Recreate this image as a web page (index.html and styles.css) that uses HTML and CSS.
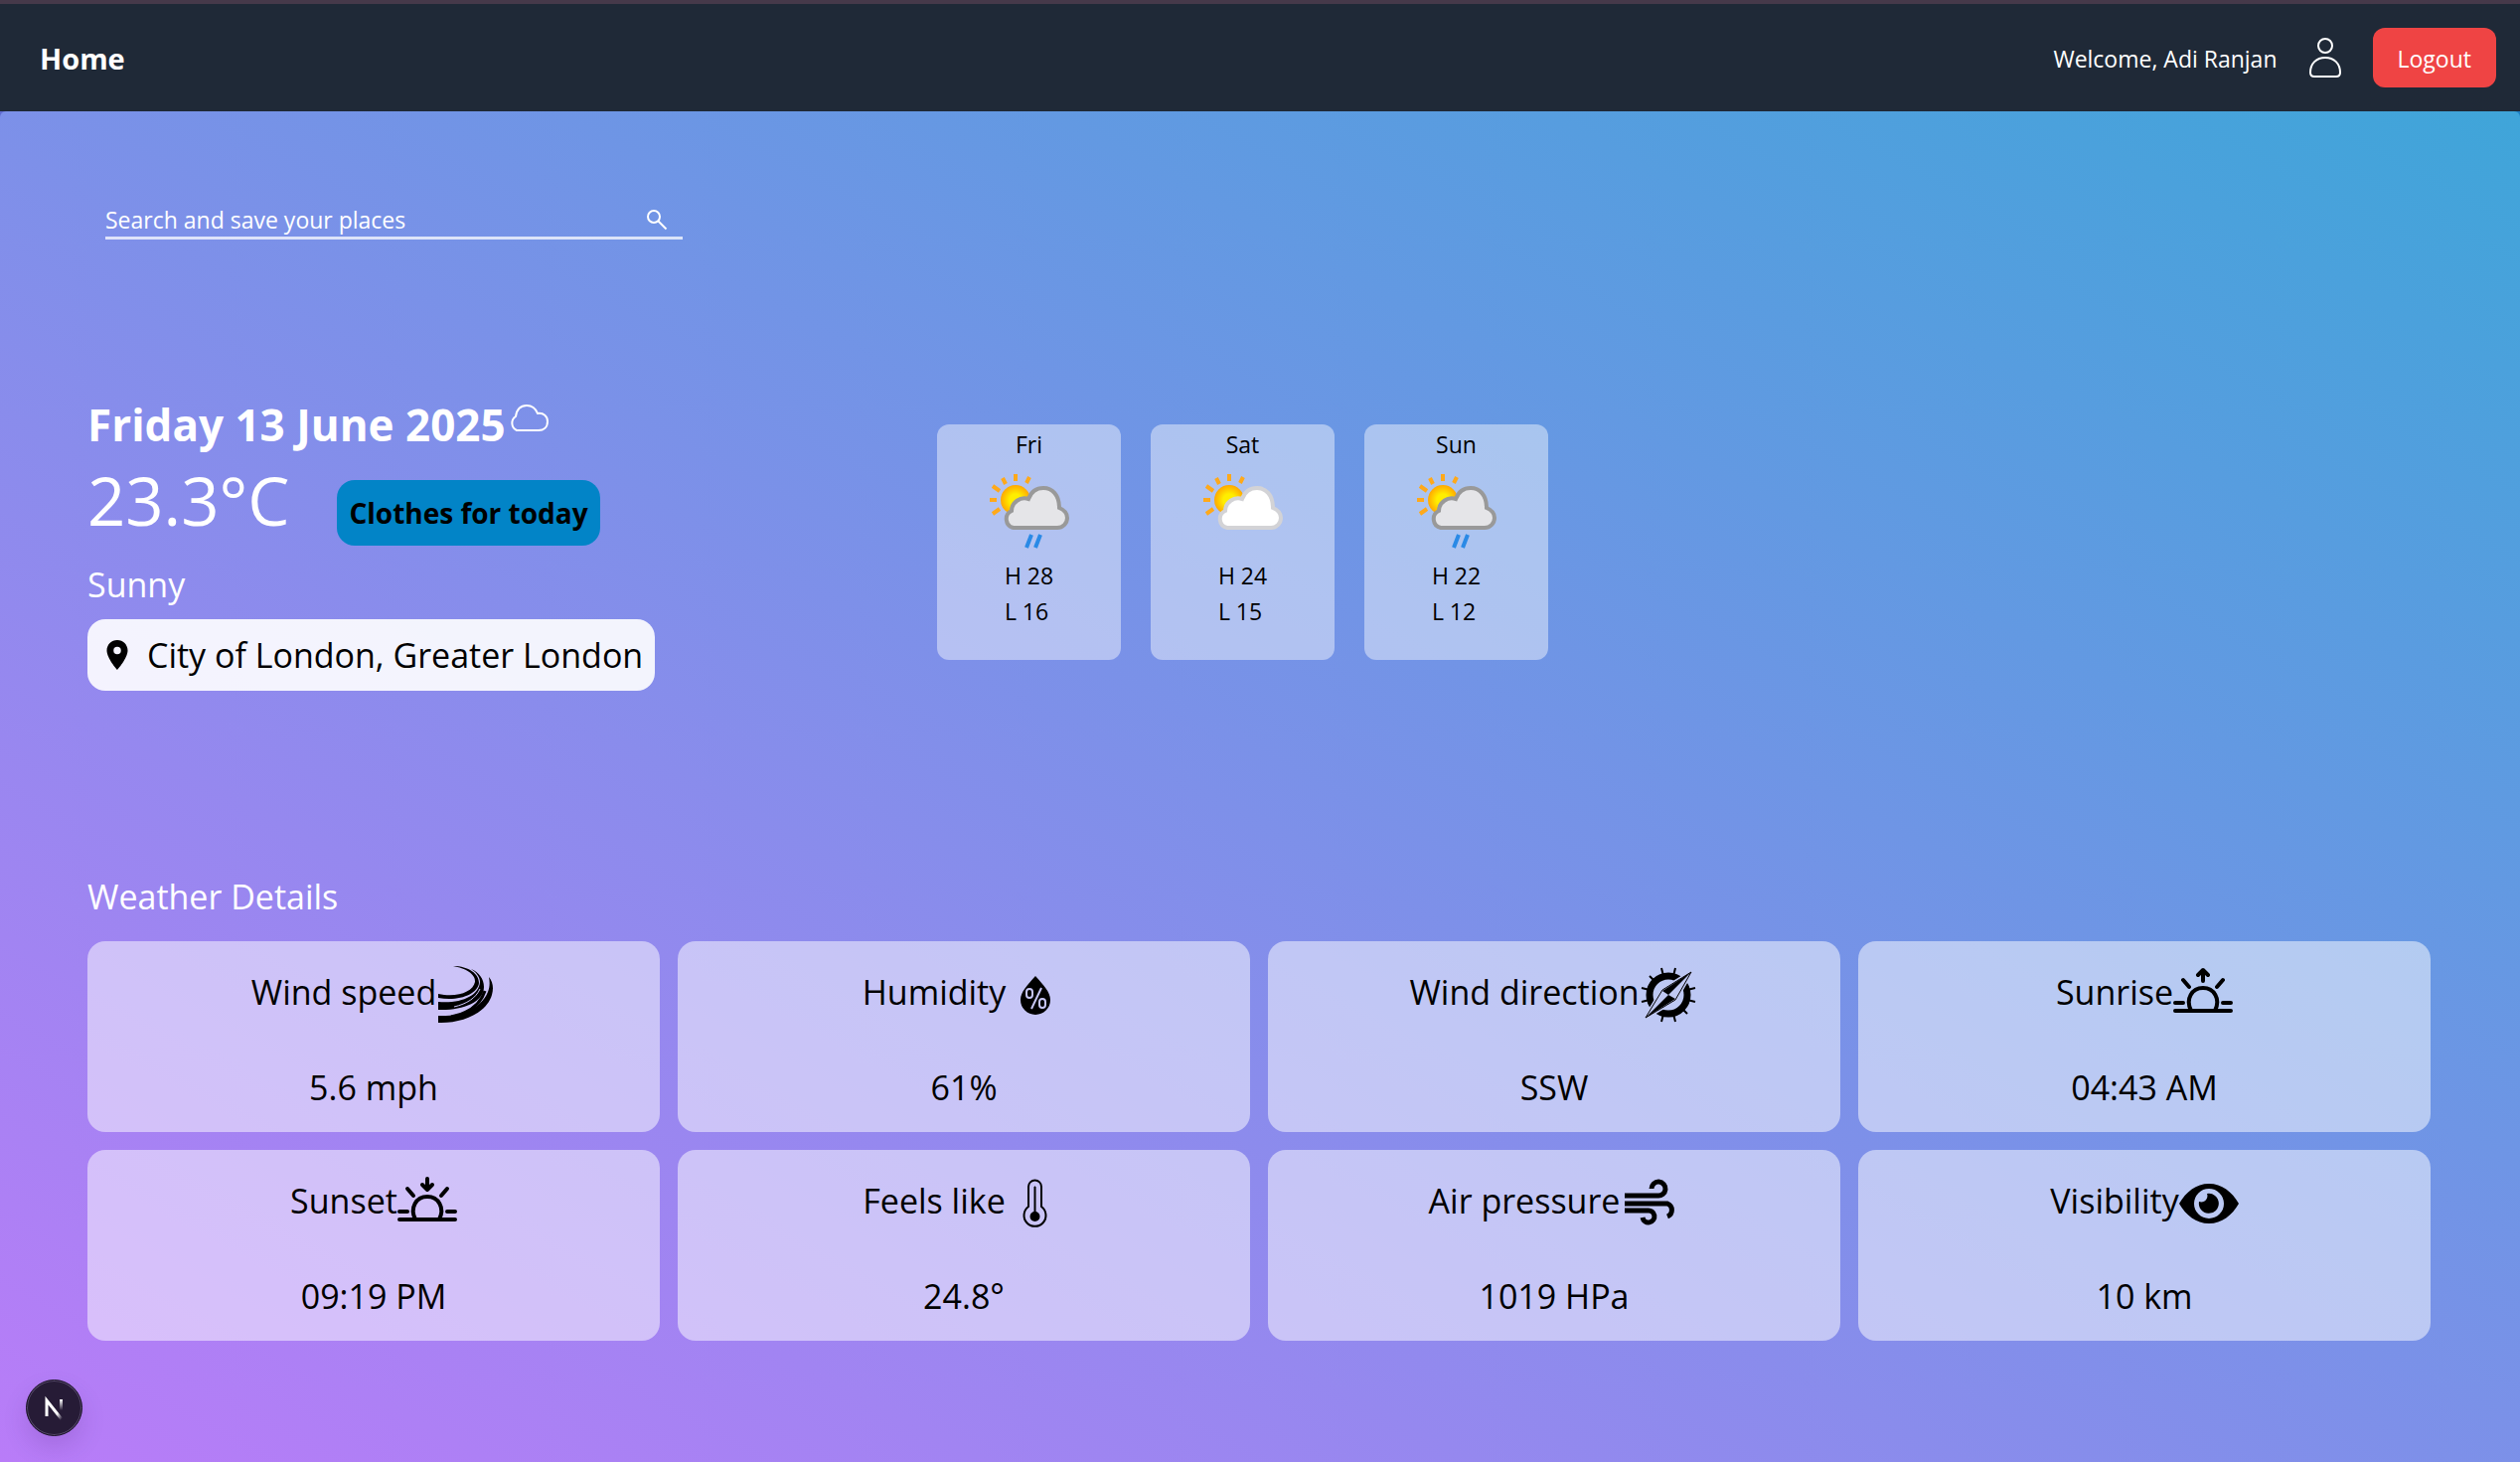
FILE: index.html
```html
<!DOCTYPE html>
<html lang="en">
<head>
<meta charset="utf-8">
<title>Home</title>
<link rel="stylesheet" href="styles.css">
</head>
<body>
<svg class="sprite" aria-hidden="true">
  <defs>
    <radialGradient id="sun-fill">
      <stop offset="0.4" stop-color="#ffee00"/>
      <stop offset="1" stop-color="#ffa800"/>
    </radialGradient>
    <linearGradient id="fade-a" x1="0" y1="0" x2="1" y2="1">
      <stop offset="0.7" stop-color="#fff"/>
      <stop offset="1" stop-color="#fff" stop-opacity="0"/>
    </linearGradient>
    <linearGradient id="fade-b" x1="0" y1="0" x2="0" y2="1">
      <stop offset="0" stop-color="#fff"/>
      <stop offset="1" stop-color="#fff" stop-opacity="0"/>
    </linearGradient>
    <symbol id="sun-cloud" viewBox="0 0 96 96">
      <path d="M34 12v7M21 16l3 6M48 15l-3 6M11 24l7 5M8 38h7M11 52l7-5" stroke="#ffa91a" stroke-width="4"/>
      <circle cx="34" cy="38" r="15" fill="url(#sun-fill)" stroke="none"/>
      <path d="M32 66a9 9 0 0 1-2-17 13 13 0 0 1 17-12C50 29 55 26 62 26c9 0 16 7 16 20 5 2 8 6 8 10a10 10 0 0 1-10 10z"/>
    </symbol>
  </defs>
</svg>

<header class="navbar">
  <a class="brand" href="#">Home</a>
  <div class="account">
    <span class="welcome">Welcome, Adi Ranjan</span>
    <svg class="user-icon" viewBox="0 0 48 48" fill="none" stroke="#fff" stroke-width="2" aria-hidden="true">
      <circle cx="24" cy="12" r="7"/>
      <path d="M9 39c0-9 6-15 15-15s15 6 15 15c0 3-1 4-4 4H13c-3 0-4-1-4-4z"/>
    </svg>
    <button class="logout" type="button">Logout</button>
  </div>
</header>

<main class="page">
  <form class="search">
    <input class="search-input" type="text" placeholder="Search and save your places" aria-label="Search and save your places">
    <button class="search-button" type="button" aria-label="Search">
      <svg viewBox="0 0 24 24" fill="none" stroke="#fff" stroke-width="2" aria-hidden="true"><circle cx="9" cy="9" r="6"/><path d="M13.500 13.500l8 8"/></svg>
    </button>
  </form>

  <section class="overview">
    <div class="current">
      <h1 class="date">Friday 13 June 2025<svg class="cloud-icon" viewBox="0 0 44 48" fill="none" stroke="#fff" stroke-width="2" aria-hidden="true"><path d="M11 36a8 8 0 0 1-1-14c1-7 5-11 11-11 5 0 9 3 11 8 6-1 10 3 10 8 0 6-4 9-9 9z"/></svg></h1>
      <div class="temperature-row">
        <span class="temperature">23.3°C</span>
        <button class="clothes" type="button">Clothes for today</button>
      </div>
      <p class="condition">Sunny</p>
      <p class="location">
        <svg class="pin" viewBox="0 0 24 24" aria-hidden="true"><path d="M12 2C8.100 2 5 5.100 5 9c0 5.200 7 13 7 13s7-7.800 7-13c0-3.900-3.100-7-7-7zm0 9.500a2.500 2.500 0 1 1 0-5 2.500 2.500 0 0 1 0 5z"/></svg>
        City of London, Greater London
      </p>
    </div>

    <div class="forecast">
      <article class="day">
        <h2>Fri</h2>
        <svg class="weather rain" viewBox="0 0 96 96" aria-hidden="true"><use href="#sun-cloud"/><path d="M50 73l-5 13M59 73l-5 13"/></svg>
        <p>H 28<br>L 16</p>
      </article>
      <article class="day">
        <h2>Sat</h2>
        <svg class="weather" viewBox="0 0 96 96" aria-hidden="true"><use href="#sun-cloud"/></svg>
        <p>H 24<br>L 15</p>
      </article>
      <article class="day">
        <h2>Sun</h2>
        <svg class="weather rain" viewBox="0 0 96 96" aria-hidden="true"><use href="#sun-cloud"/><path d="M50 73l-5 13M59 73l-5 13"/></svg>
        <p>H 22<br>L 12</p>
      </article>
    </div>
  </section>

  <section class="details">
    <h2 class="details-title">Weather Details</h2>
    <div class="grid">
      <article class="card">
        <h3>Wind speed<svg class="icon" viewBox="0 0 60 60" aria-hidden="true">
          <path d="M17 1C33 1 43 9 43 18 42 29 23 37 2 33v-4c19 4 35-2 37-12C40 9 29 3 17 1z"/>
          <path d="M35 4c8 3 13 10 13 18C48 38 25 46 2 45v-8c23 2 41-6 42-20 0-5-4-10-9-13z"/>
          <path d="M53 12c4 5 5 11 3 18C51 48 26 59 2 58v-7c26 1 44-9 50-24 2-5 2-10 1-15z"/>
          <path d="M15 52c16-3 29-11 34-26" fill="none" stroke="#000" stroke-width="3"/>
          <path d="M18 42c13-3 22-9 26-18" fill="none" stroke="#cdc5f7"/>
        </svg></h3>
        <p>5.6 mph</p>
      </article>
      <article class="card">
        <h3>Humidity<svg class="icon" viewBox="0 0 60 60" aria-hidden="true">
          <path d="M30 11c8 9 15 16 15 24a15 15 0 0 1-30 0c0-8 7-15 15-24z"/>
          <g fill="none" stroke="#c7c6f5" stroke-width="2"><rect x="21" y="24" width="6" height="9" rx="3"/><rect x="34" y="34" width="6" height="9" rx="3"/><path d="M36 23L26 44"/></g>
        </svg></h3>
        <p>61%</p>
      </article>
      <article class="card">
        <h3>Wind direction<svg class="icon" viewBox="0 0 60 60" aria-hidden="true">
          <circle cx="29" cy="30" r="19" fill="none" stroke="#000" stroke-width="7"/>
          <path d="M22 3l2 8M36 3l-2 8M22 57l2-8M36 57l-2-8M2 23l8 2M2 37l8-2M56 23l-8 2M56 37l-8-2M10 11l5 5M48 49l-5-5" stroke="#000" stroke-width="2"/>
          <path d="M52 7L36 35 6 53 23 25z" fill="#c0c8f3" stroke="#c0c8f3" stroke-width="4"/>
          <path d="M52 7L36 35 6 53 23 25z" fill="none" stroke="#000"/>
          <path d="M52 7L23 26l6 4zM6 53l30-19-7-4z"/>
        </svg></h3>
        <p>SSW</p>
      </article>
      <article class="card">
        <h3>Sunrise<svg class="icon line" viewBox="0 0 60 60" aria-hidden="true">
          <path d="M2 46h56M2 38h8M50 38h8M18 46c-6-12 1-23 12-23s18 11 12 23M10 15l6 7M50 15l-6 7M30 16V5M25 10l5-5 5 5"/>
        </svg></h3>
        <p>04:43 AM</p>
      </article>
      <article class="card">
        <h3>Sunset<svg class="icon line" viewBox="0 0 60 60" aria-hidden="true">
          <path d="M2 46h56M2 38h8M50 38h8M18 46c-6-12 1-23 12-23s18 11 12 23M10 15l6 7M50 15l-6 7M30 5v11M25 11l5 5 5-5"/>
        </svg></h3>
        <p>09:19 PM</p>
      </article>
      <article class="card">
        <h3>Feels like<svg class="icon" viewBox="0 0 60 60" aria-hidden="true">
          <path d="M23 33V13a6 6 0 0 1 13 0v20a11 11 0 1 1-13 0z" fill="none" stroke="#000" stroke-width="2"/>
          <path d="M29 13h1v26h-1z" stroke="#000"/><circle cx="29.500" cy="43" r="5"/>
        </svg></h3>
        <p>24.8°</p>
      </article>
      <article class="card">
        <h3>Air pressure<svg class="icon" viewBox="0 0 60 60" fill="none" stroke="#000" stroke-width="5" aria-hidden="true">
          <path d="M5 22h33a7 7 0 1 0-6-7M5 30h43a7 7 0 0 1 0 13M5 37h23a6 6 0 1 1-5 7"/>
        </svg></h3>
        <p>1019 HPa</p>
      </article>
      <article class="card">
        <h3>Visibility<svg class="icon" viewBox="0 0 60 60" aria-hidden="true">
          <path fill-rule="evenodd" d="M30 10c13 0 23 8 30 20-7 12-17 20-30 20S7 42 0 30c7-12 17-20 30-20zm0 5a15 15 0 1 0 0 30 15 15 0 0 0 0-30z"/>
          <path d="M28 20a10 10 0 1 1-8 8c5 2 10-3 8-8z"/>
        </svg></h3>
        <p>10 km</p>
      </article>
    </div>
  </section>
</main>

<button class="dev-badge" type="button" aria-label="Open developer tools">
  <svg viewBox="0 0 40 40" fill="none" aria-hidden="true"><path d="M12 28V12l15 19" stroke="url(#fade-a)" stroke-width="3"/><path d="M25 11h3v11h-3z" fill="url(#fade-b)"/></svg>
</button>
</body>
</html>
```
FILE: styles.css
```css
* { box-sizing: border-box; margin: 0; padding: 0; }

body {
  min-height: 100vh;
  display: flex;
  flex-direction: column;
  background: linear-gradient(to right, #5f6bd0, #1e80c4);
  color: #000;
  font: 23px/36px "Open Sans", "Noto Sans", sans-serif;
}

button, input { font: inherit; color: inherit; border: 0; background: none; }
button { cursor: pointer; }
.sprite { position: absolute; width: 0; height: 0; }

.navbar {
  display: flex;
  align-items: center;
  justify-content: space-between;
  border-top: 4px solid #46394a;
  padding: 24px 24px 24px 40px;
  background: #1f2937;
  color: #fff;
}
.brand { padding-top: 2px; color: inherit; font-size: 29px; font-weight: 700; text-decoration: none; }
.account { display: flex; align-items: center; gap: 24px; }
.welcome { padding-top: 2px; }
.user-icon { width: 48px; height: 48px; }
.logout { padding: 13px 25px 11px; border-radius: 12px; background: #ef4444; }

.page {
  flex: 1;
  padding: 88px 90px 88px 88px;
  border-radius: 6px 6px 0 0;
  background: linear-gradient(to top right, #b97cf8, #3fa5d9);
}

.search {
  display: flex;
  align-items: center;
  width: 581px;
  margin-left: 18px;
  padding-top: 4px;
  border-bottom: 3px solid rgba(255, 255, 255, 0.75);
  color: #fff;
}
.search-input { flex: 1; height: 34px; outline: 0; }
.search-input::placeholder { color: #fff; opacity: 1; }
.search-button { width: 24px; height: 24px; margin-right: 14px; }
.search-button svg { display: block; width: 24px; height: 24px; }

.overview { display: flex; align-items: flex-start; margin-top: 156px; }
.current { width: 855px; color: #fff; }
.date { display: flex; align-items: center; font-size: 44px; line-height: 60px; }
.cloud-icon { width: 44px; height: 48px; margin-bottom: 12px; }
.temperature-row { display: flex; align-items: flex-end; gap: 48px; }
.temperature { font-size: 67px; line-height: 92px; }
.clothes {
  padding: 12px;
  border-radius: 18px;
  background: #0284c7;
  color: #000;
  font-size: 28px;
  font-weight: 700;
  line-height: 42px;
}
.condition { margin-top: 12px; font-size: 34px; line-height: 54px; }
.location {
  display: flex;
  align-items: center;
  gap: 12px;
  width: fit-content;
  margin-top: 8px;
  padding: 9px 12px;
  border-radius: 18px;
  background: rgba(255, 255, 255, 0.9);
  color: #000;
  font-size: 34px;
  line-height: 54px;
}
.pin { width: 36px; height: 36px; }

.forecast { display: flex; gap: 30px; margin-top: 30px; }
.day {
  display: flex;
  flex-direction: column;
  align-items: center;
  width: 185px;
  padding: 2px 0 31px;
  border-radius: 12px;
  background: rgba(255, 255, 255, 0.44);
}
.day h2 { font-size: inherit; font-weight: 400; }
.weather { width: 96px; height: 96px; fill: #fff; stroke: #d3d3d6; stroke-width: 4px; }
.weather.rain { fill: #e5e5e8; stroke: #999; }
.weather > path { stroke: #2a8ae6; stroke-width: 4px; }

.details { margin-top: 180px; }
.details-title { color: #fff; font-size: 34px; font-weight: 400; line-height: 54px; }
.grid { display: grid; grid-template-columns: repeat(4, 1fr); gap: 18px; margin-top: 18px; }
.card {
  padding: 24px 0 18px;
  border-radius: 18px;
  background: rgba(255, 255, 255, 0.5);
  font-size: 34px;
  line-height: 54px;
  text-align: center;
}
.card h3 { display: flex; align-items: flex-start; justify-content: center; font-size: inherit; font-weight: 400; }
.card p { margin-top: 36px; }
.icon { width: 60px; height: 60px; }
.line { fill: none; stroke: #000; stroke-width: 4px; stroke-linecap: round; stroke-linejoin: round; }

.dev-badge {
  position: fixed;
  left: 26px;
  bottom: 26px;
  width: 57px;
  height: 57px;
  border: 1px solid #1b1426;
  border-radius: 50%;
  background: #261b36;
  box-shadow: inset 0 0 0 1px #56496a, 0 12px 24px rgba(60, 20, 100, 0.15);
}
.dev-badge svg { display: block; width: 40px; height: 40px; margin: auto; }
```
